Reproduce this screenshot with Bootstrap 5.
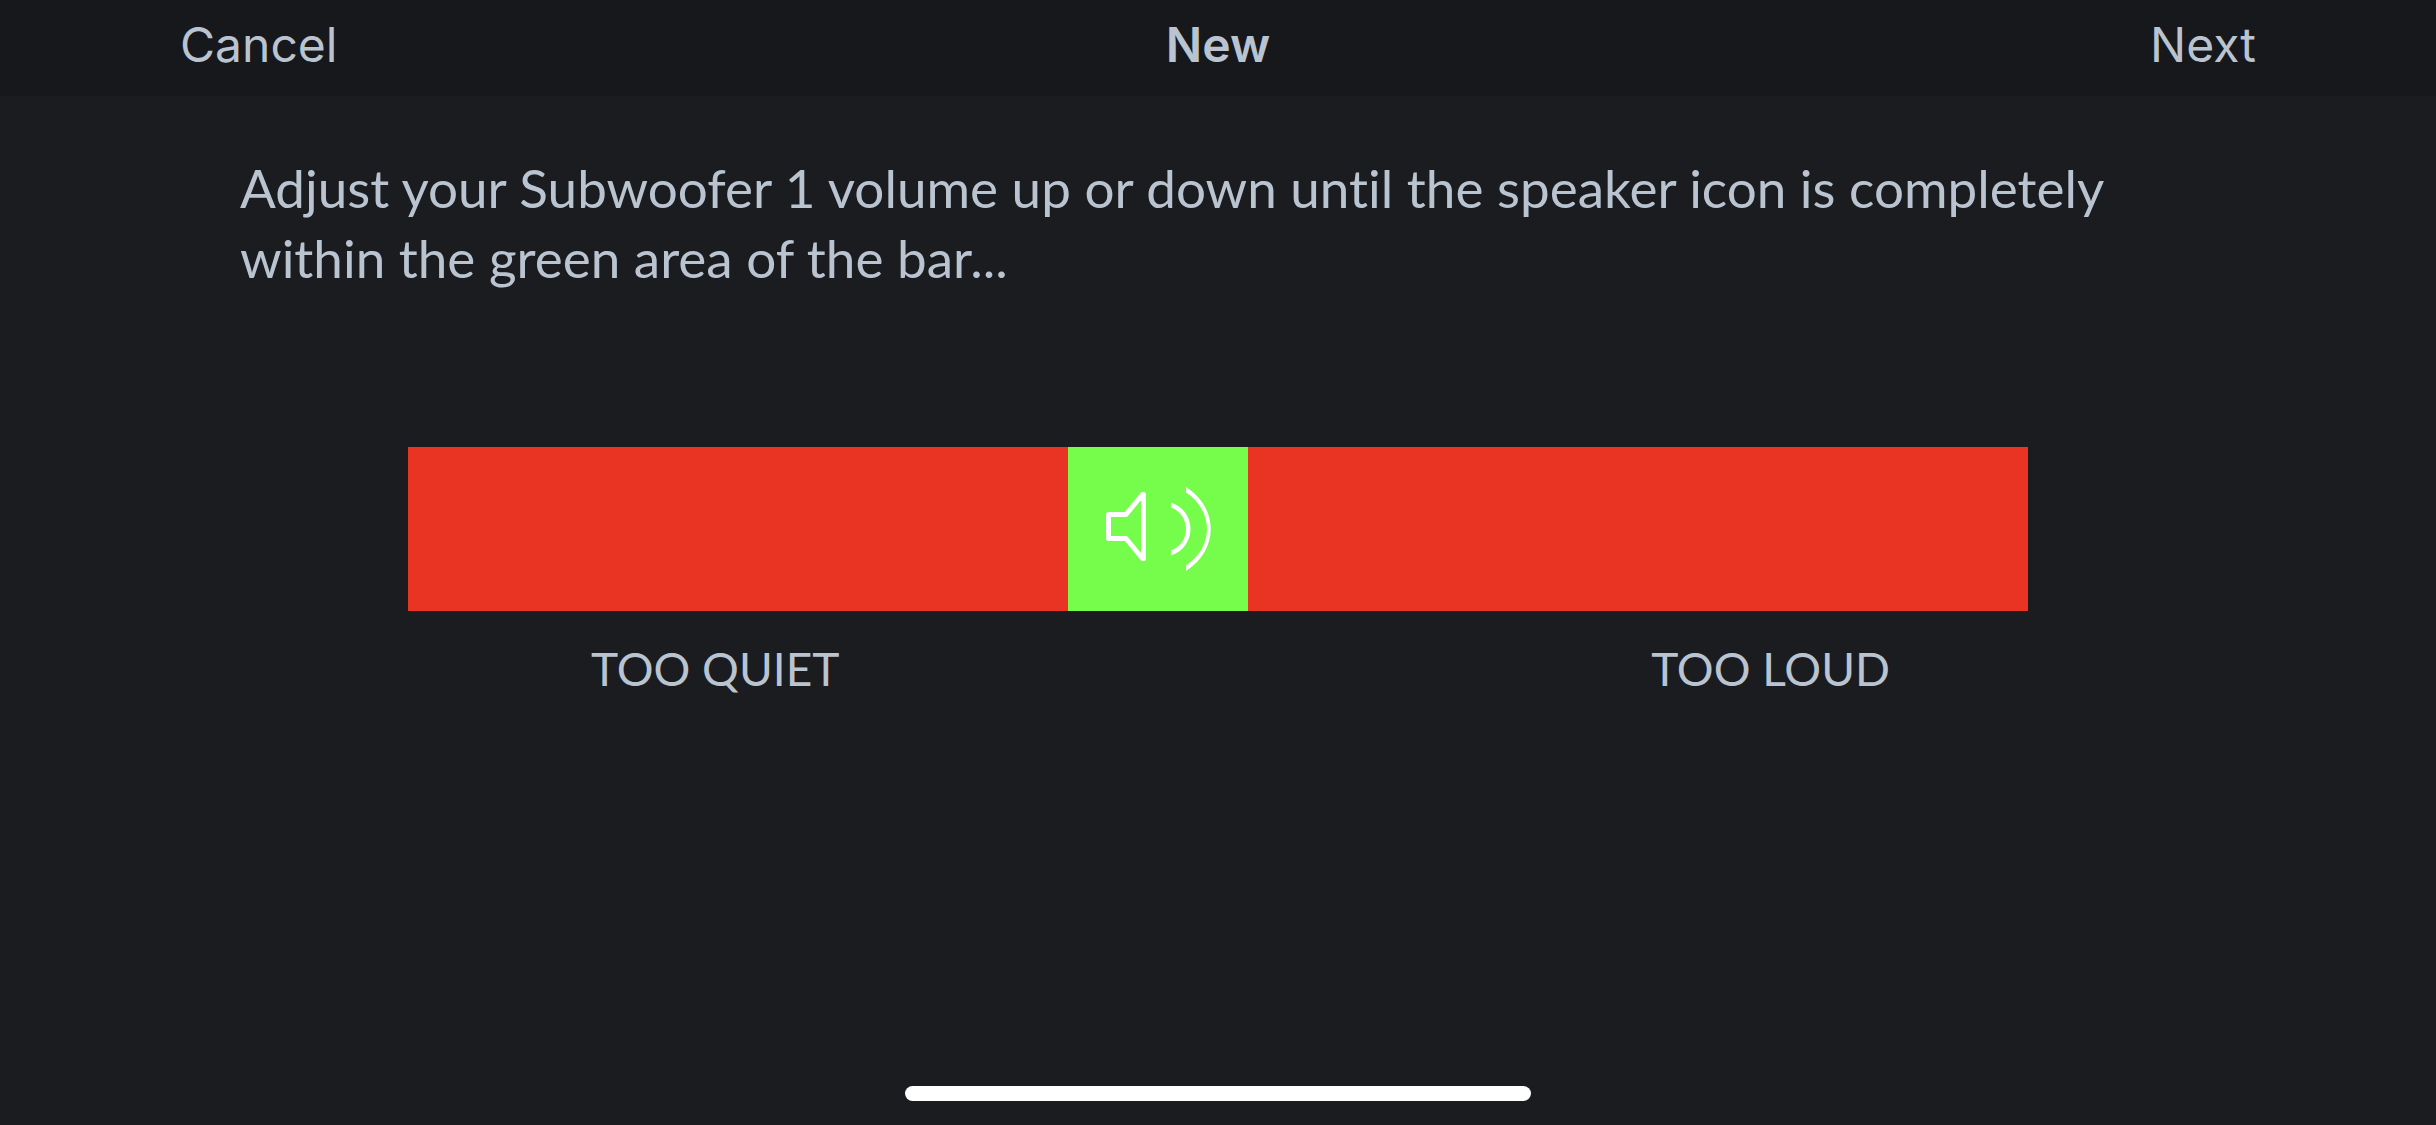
<!DOCTYPE html>
<html lang="en">
<head>
<meta charset="utf-8">
<meta name="viewport" content="width=device-width, initial-scale=1">
<title>New</title>
<link href="https://cdn.jsdelivr.net/npm/bootstrap@5.3.0/dist/css/bootstrap.min.css" rel="stylesheet">
<style>
  body { background: #1b1c20; color: #b9c4d0; font-family: Lato, "Open Sans", sans-serif; font-variant-ligatures: none; }
  .topbar { background: #17181c; height: 96px; padding: 0 180px 6px; font-family: Inter, Roboto, sans-serif; }
  .topbar .btn, .topbar h1 { font-size: 48px; line-height: 60px; color: inherit; }
  .topbar h1 { font-weight: 600; }
  .instructions { margin: 57px 240px 154px; font-size: 53px; line-height: 70px; }
  .meter-wrap { width: 1620px; max-width: 100%; }
  .meter { height: 164px; background: #e93323; }
  .zone { background: #76fd4c; }
  .scale-labels { padding: 30px 138px 0 183px; font-size: 46px; line-height: 56px; }
  .home-indicator { width: 626px; height: 15px; background: #fff; margin-bottom: 24px; }
</style>
</head>
<body class="d-flex flex-column min-vh-100">
<header class="topbar d-flex align-items-center">
  <div class="col text-start"><button type="button" class="btn border-0 p-0">Cancel</button></div>
  <h1 class="m-0">New</h1>
  <div class="col text-end"><button type="button" class="btn border-0 p-0">Next</button></div>
</header>
<main class="flex-grow-1">
  <p class="instructions">Adjust your Subwoofer 1 volume up or down until the speaker icon is completely within the green area of the bar...</p>
  <div class="meter-wrap mx-auto">
    <div class="meter d-flex">
      <div class="zone d-flex" style="width:11.111%;margin-left:40.741%">
        <svg width="180" height="164" viewBox="0 0 180 164" role="img" aria-label="Speaker">
          <path d="M40.500 67.500H58L74.500 47.500H75.500V111.500H74.500L58 91.500H40.500Z" fill="none" stroke="#fff" stroke-width="5" stroke-linejoin="round"/>
          <path fill="#fff" d="M103 55.500C129 64 129 100 103 108.500V103.500C123 96 123 68 103 60.500ZM118 40C151 61 151 103 118 124V118.500C146 100 146 64 118 45.500Z"/>
        </svg>
      </div>
    </div>
    <div class="scale-labels d-flex justify-content-between">
      <span>TOO QUIET</span>
      <span>TOO LOUD</span>
    </div>
  </div>
</main>
<div class="home-indicator rounded-pill mx-auto"></div>
<script src="https://cdn.jsdelivr.net/npm/bootstrap@5.3.0/dist/js/bootstrap.bundle.min.js"></script>
</body>
</html>
